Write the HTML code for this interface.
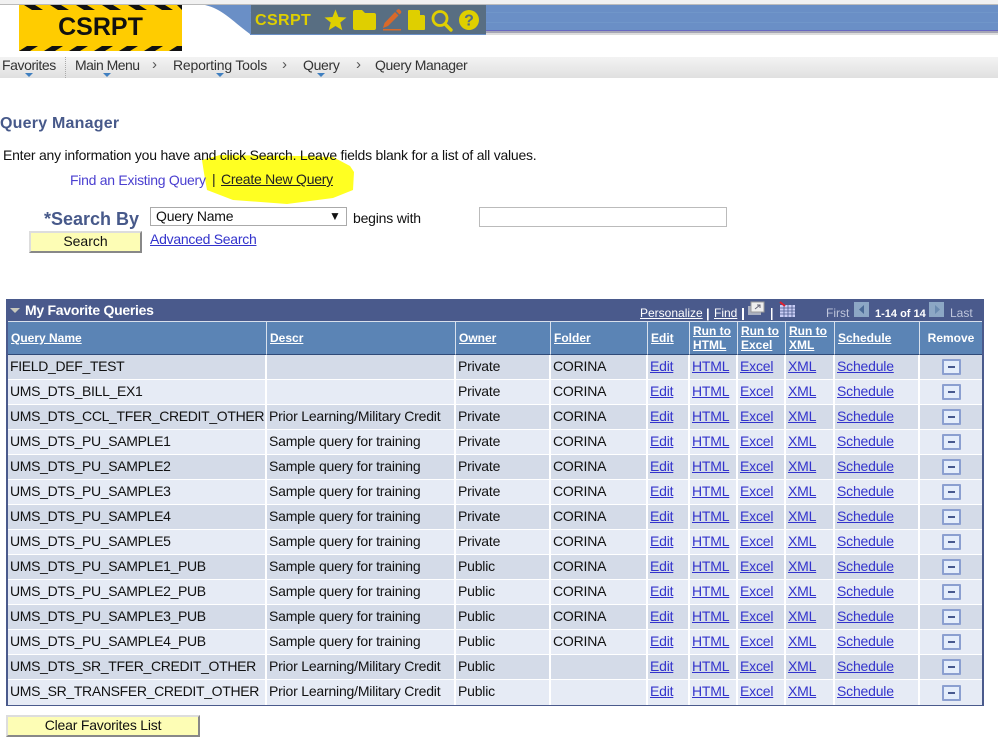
<!DOCTYPE html>
<html><head><meta charset="utf-8"><style>
html,body{margin:0;padding:0;background:#fff}
body{position:relative;width:998px;height:745px;overflow:hidden;font-family:"Liberation Sans",sans-serif;font-size:14px;color:#111}
.a{position:absolute;white-space:nowrap}
a,.l{color:#3333cc;text-decoration:underline}
.nav{color:#333;font-size:14px;top:57px;line-height:17px;letter-spacing:-.32px}
.chev{color:#555;font-size:15px;top:56px;line-height:17px}
.tri{position:absolute;top:73px;width:0;height:0;border-left:4px solid transparent;border-right:4px solid transparent;border-top:4px solid #3f7fc0}
.btn{position:absolute;background:#fdfdb5;border:2px solid;border-color:#ddd #888 #888 #ddd;box-sizing:border-box;text-align:center;color:#111;font-size:14px}
table{position:absolute;left:6px;top:321px;width:978px;border-collapse:separate;border-spacing:0;table-layout:fixed;border-left:2px solid #4a5a8c;border-right:2px solid #4a5a8c;border-bottom:1px solid #4a5a8c;box-sizing:border-box}
th{background:#5b84b5;color:#fff;font-size:12px;font-weight:bold;height:34px;padding:0 0 0 3px;text-align:left;border-right:1px solid #d8e0ec;border-top:1px solid #d8e0ec;border-bottom:1px solid #2f4a78;line-height:14px;box-sizing:border-box}
th a{color:#fff}
td{height:25px;box-sizing:border-box;padding:0 0 3px 2px;border-right:2px solid #fff;border-bottom:1px solid #fff;white-space:nowrap;overflow:hidden;line-height:20px;letter-spacing:-.2px}
td:first-child{letter-spacing:-.33px}
tr:last-child td{border-bottom:0;height:25px}
td:last-child,th:last-child{border-right:0}
tr.o td{background:#d4dbe8}
tr.e td{background:#e6ebf5}
td.r{text-align:center;padding:0}
.m{display:inline-block;width:19px;height:16px;box-sizing:border-box;border:2px solid #8b9fd0;background:#e4edfb;vertical-align:middle;position:relative;top:-1px;border-radius:1px}
.m:after{content:"";position:absolute;left:4px;top:5px;width:7px;height:2px;background:#47598f}
</style></head><body>

<div class="a" style="left:0;top:0;width:998px;height:4px;background:#f1f1f1"></div>
<div class="a" style="left:0;top:4px;width:998px;height:1px;background:#bbb"></div>

<svg class="a" style="left:200px;top:5px" width="798" height="30" viewBox="0 0 798 30">
<path d="M5 0 C22 4 30 14 50 29 L50 30 L798 30 L798 0Z" fill="#6a8fc6"/>
<rect x="50" y="7" width="748" height="1" fill="#7096c9"/>
<rect x="50" y="17" width="748" height="1" fill="#7096c9"/>
<rect x="286" y="25" width="512" height="1" fill="#6868c0"/>
<rect x="286" y="26" width="512" height="2" fill="#a5a5b5"/>
<rect x="286" y="28" width="512" height="2" fill="#dcdcdc"/>
</svg>

<div class="a" style="left:19px;top:5px;width:163px;height:46px;background:#ffcc00;overflow:hidden">
<svg width="163" height="46" style="position:absolute;left:0;top:0">
<g fill="#111">
<path d="M5 0h11l8 5h-11zM31 0h11l8 5h-11zM57 0h11l8 5h-11zM83 0h11l8 5h-11zM109 0h11l8 5h-11zM135 0h11l8 5h-11zM158 0h5v5z"/>
<path d="M0 46l8-5h11l-8 5zM25 46l8-5h11l-8 5zM50 46l8-5h11l-8 5zM75 46l8-5h11l-8 5zM100 46l8-5h11l-8 5zM125 46l8-5h11l-8 5zM150 46l8-5h5v5z"/>
</g></svg>
<div class="a" style="left:0;width:163px;text-align:center;top:8px;font-size:25px;line-height:29px;font-weight:bold;color:#111">CSRPT</div>
</div>

<div class="a" style="left:251px;top:5px;width:235px;height:29px;background:#586e82"></div>
<div class="a" style="left:255px;top:11px;font-size:16px;line-height:20px;font-weight:bold;color:#dfcf00;letter-spacing:.4px">CSRPT</div>
<svg class="a" style="left:322px;top:7px" width="160" height="26" viewBox="0 0 160 26">
<path d="M13.5 2.500l3 7.500 8 .5-6.200 5 2 7.800-6.800-4.300-6.800 4.300 2-7.800-6.200-5 8-.5z" fill="#dfcf00"/>
<path d="M31 5q0-2 2-2h7l3 3h9q2 0 2 2v13q0 2-2 2H33q-2 0-2-2z" fill="#dfcf00"/>
<path d="M61 21l1.500-5L73 5l3.500 3.500L66 19z" fill="#d9692a"/><path d="M74 4l1.500-1.500q1-.7 2 0l1.500 1.500q.7 1 0 2L77.500 7.500z" fill="#d9692a"/><rect x="61" y="22" width="18" height="1.500" fill="#d9692a"/>
<path d="M87 3h10l6 6v13q0 1-1 1H87q-1 0-1-1V4q0-1 1-1z" fill="#dfcf00"/><path d="M98 3v5h5z" fill="#586e82"/>
<circle cx="118" cy="11.500" r="7" fill="none" stroke="#dfcf00" stroke-width="2.800"/><path d="M123 17l6 6" stroke="#dfcf00" stroke-width="3.400" stroke-linecap="round"/>
<circle cx="147" cy="13" r="10" fill="#dfcf00"/>
<text x="147" y="18.500" font-family="Liberation Sans" font-size="16" font-weight="bold" text-anchor="middle" fill="#586e82">?</text>
</svg>

<div class="a" style="left:0;top:57px;width:998px;height:21px;background:linear-gradient(#f3f3f3,#e0e0e0)"></div>
<div class="a nav" style="left:2px;letter-spacing:-.42px">Favorites</div>
<div class="a" style="left:65px;top:57px;height:21px;border-left:1px dotted #aaa"></div>
<div class="a nav" style="left:75px;letter-spacing:-.52px">Main Menu</div>
<div class="a chev" style="left:152px">›</div>
<div class="a nav" style="left:173px;letter-spacing:-.2px">Reporting Tools</div>
<div class="a chev" style="left:282px">›</div>
<div class="a nav" style="left:303px">Query</div>
<div class="a chev" style="left:356px">›</div>
<div class="a nav" style="left:375px;letter-spacing:-.38px">Query Manager</div>
<div class="tri" style="left:25px"></div><div class="tri" style="left:103px"></div><div class="tri" style="left:216px"></div><div class="tri" style="left:317px"></div>

<div class="a" style="left:0;top:114px;font-size:16px;line-height:20px;font-weight:bold;color:#47598a;letter-spacing:.22px">Query Manager</div>

<svg class="a" style="left:0;top:0" width="400" height="220"><path d="M202 160L220 155L300 156L333 157L350 166L354 172L353 190L333 198L287 204L233 200L207 190L204 173Z" fill="#ffff22"/></svg>
<div class="a" style="left:3px;top:147px;line-height:17px;color:#111;letter-spacing:-.23px">Enter any information you have and click Search. Leave fields blank for a list of all values.</div>

<div class="a" style="left:70px;top:172px;line-height:17px;color:#4a3fd0;letter-spacing:-.27px">Find an Existing Query</div>
<div class="a" style="left:212px;top:171px;line-height:17px;color:#222">|</div>
<div class="a" style="left:221px;top:171px;line-height:17px;color:#222;text-decoration:underline;letter-spacing:-.25px">Create New Query</div>

<div class="a" style="left:44px;top:208px;font-size:18px;line-height:22px;font-weight:bold;color:#47598a">*Search By</div>
<div class="a" style="left:150px;top:207px;width:197px;height:19px;border:1px solid #aaa;box-sizing:border-box;line-height:16px;padding-left:5px;background:#fff;letter-spacing:-.2px">Query Name<span class="a" style="left:178px;top:2px;font-size:12px;line-height:13px">▼</span></div>
<div class="a" style="left:353px;top:210px;line-height:17px;letter-spacing:-.2px">begins with</div>
<div class="a" style="left:479px;top:207px;width:248px;height:20px;border:1px solid #bbb;box-sizing:border-box;background:#fff"></div>
<div class="btn" style="left:29px;top:231px;width:113px;height:22px;line-height:17px">Search</div>
<div class="a" style="left:150px;top:231px;line-height:17px;letter-spacing:-.27px"><a>Advanced Search</a></div>

<div class="a" style="left:6px;top:299px;width:978px;height:22px;background:#4a5a8c"></div>
<div class="a" style="left:10px;top:308px;width:0;height:0;border-left:5px solid transparent;border-right:5px solid transparent;border-top:5px solid #c9c9bd"></div>
<div class="a" style="left:25px;top:302px;font-size:14px;line-height:16px;font-weight:bold;color:#fff;letter-spacing:-.27px">My Favorite Queries</div>
<div class="a" style="left:640px;top:306px;font-size:12px;line-height:15px;color:#fff"><u>Personalize</u></div>
<div class="a" style="left:706px;top:306px;font-size:13px;line-height:15px;color:#fff;font-weight:bold">|</div>
<div class="a" style="left:714px;top:306px;font-size:12px;line-height:15px;color:#fff"><u>Find</u></div>
<svg class="a" style="left:740px;top:300px" width="60" height="22">
<rect x="2" y="8" width="2" height="12" fill="#fff"/>
<rect x="8" y="6" width="13" height="9" fill="#aab0c0"/><rect x="11" y="2" width="13" height="10" fill="#eee" stroke="#999"/><path d="M15 9l5-4M17 5h3v3" stroke="#667" fill="none"/>
<rect x="31" y="8" width="1.500" height="12" fill="#fff"/>
<rect x="40" y="5" width="15" height="12" fill="#c9cdf5"/><path d="M40 8h15M40 11h15M40 14h15M44 5v12M48 5v12M52 5v12" stroke="#4a5a8c" stroke-width=".8"/><path d="M40 2l5 4" stroke="#e02030" stroke-width="2"/>
</svg>
<div class="a" style="left:826px;top:306px;font-size:12px;line-height:15px;color:#bfc6dc">First</div>
<svg class="a" style="left:854px;top:302px" width="15" height="15"><rect width="15" height="15" fill="#8ca7c5"/><path d="M10 3v9l-5-4.500z" fill="#4a6a96"/></svg>
<div class="a" style="left:875px;top:307px;font-size:11px;line-height:14px;font-weight:bold;color:#fff">1-14 of 14</div>
<svg class="a" style="left:929px;top:302px" width="15" height="15"><rect width="15" height="15" fill="#8ca7c5"/><path d="M6 3v9l5-4.500z" fill="#6a8ab0"/></svg>
<div class="a" style="left:950px;top:306px;font-size:12px;line-height:15px;color:#bfc6dc">Last</div>

<table>
<colgroup><col style="width:259px"><col style="width:189px"><col style="width:95px"><col style="width:97px"><col style="width:42px"><col style="width:48px"><col style="width:48px"><col style="width:49px"><col style="width:85px"><col></colgroup>
<tr><th><a>Query Name</a></th><th><a>Descr</a></th><th><a>Owner</a></th><th><a>Folder</a></th><th><a>Edit</a></th><th><a>Run to HTML</a></th><th><a>Run to Excel</a></th><th><a>Run to XML</a></th><th><a>Schedule</a></th><th style="text-align:center;padding:0">Remove</th></tr>
<tr class="o"><td>FIELD_DEF_TEST</td><td></td><td>Private</td><td>CORINA</td><td><a>Edit</a></td><td><a>HTML</a></td><td><a>Excel</a></td><td><a>XML</a></td><td><a>Schedule</a></td><td class="r"><span class="m"></span></td></tr>
<tr class="e"><td>UMS_DTS_BILL_EX1</td><td></td><td>Private</td><td>CORINA</td><td><a>Edit</a></td><td><a>HTML</a></td><td><a>Excel</a></td><td><a>XML</a></td><td><a>Schedule</a></td><td class="r"><span class="m"></span></td></tr>
<tr class="o"><td>UMS_DTS_CCL_TFER_CREDIT_OTHER</td><td>Prior Learning/Military Credit</td><td>Private</td><td>CORINA</td><td><a>Edit</a></td><td><a>HTML</a></td><td><a>Excel</a></td><td><a>XML</a></td><td><a>Schedule</a></td><td class="r"><span class="m"></span></td></tr>
<tr class="e"><td>UMS_DTS_PU_SAMPLE1</td><td>Sample query for training</td><td>Private</td><td>CORINA</td><td><a>Edit</a></td><td><a>HTML</a></td><td><a>Excel</a></td><td><a>XML</a></td><td><a>Schedule</a></td><td class="r"><span class="m"></span></td></tr>
<tr class="o"><td>UMS_DTS_PU_SAMPLE2</td><td>Sample query for training</td><td>Private</td><td>CORINA</td><td><a>Edit</a></td><td><a>HTML</a></td><td><a>Excel</a></td><td><a>XML</a></td><td><a>Schedule</a></td><td class="r"><span class="m"></span></td></tr>
<tr class="e"><td>UMS_DTS_PU_SAMPLE3</td><td>Sample query for training</td><td>Private</td><td>CORINA</td><td><a>Edit</a></td><td><a>HTML</a></td><td><a>Excel</a></td><td><a>XML</a></td><td><a>Schedule</a></td><td class="r"><span class="m"></span></td></tr>
<tr class="o"><td>UMS_DTS_PU_SAMPLE4</td><td>Sample query for training</td><td>Private</td><td>CORINA</td><td><a>Edit</a></td><td><a>HTML</a></td><td><a>Excel</a></td><td><a>XML</a></td><td><a>Schedule</a></td><td class="r"><span class="m"></span></td></tr>
<tr class="e"><td>UMS_DTS_PU_SAMPLE5</td><td>Sample query for training</td><td>Private</td><td>CORINA</td><td><a>Edit</a></td><td><a>HTML</a></td><td><a>Excel</a></td><td><a>XML</a></td><td><a>Schedule</a></td><td class="r"><span class="m"></span></td></tr>
<tr class="o"><td>UMS_DTS_PU_SAMPLE1_PUB</td><td>Sample query for training</td><td>Public</td><td>CORINA</td><td><a>Edit</a></td><td><a>HTML</a></td><td><a>Excel</a></td><td><a>XML</a></td><td><a>Schedule</a></td><td class="r"><span class="m"></span></td></tr>
<tr class="e"><td>UMS_DTS_PU_SAMPLE2_PUB</td><td>Sample query for training</td><td>Public</td><td>CORINA</td><td><a>Edit</a></td><td><a>HTML</a></td><td><a>Excel</a></td><td><a>XML</a></td><td><a>Schedule</a></td><td class="r"><span class="m"></span></td></tr>
<tr class="o"><td>UMS_DTS_PU_SAMPLE3_PUB</td><td>Sample query for training</td><td>Public</td><td>CORINA</td><td><a>Edit</a></td><td><a>HTML</a></td><td><a>Excel</a></td><td><a>XML</a></td><td><a>Schedule</a></td><td class="r"><span class="m"></span></td></tr>
<tr class="e"><td>UMS_DTS_PU_SAMPLE4_PUB</td><td>Sample query for training</td><td>Public</td><td>CORINA</td><td><a>Edit</a></td><td><a>HTML</a></td><td><a>Excel</a></td><td><a>XML</a></td><td><a>Schedule</a></td><td class="r"><span class="m"></span></td></tr>
<tr class="o"><td>UMS_DTS_SR_TFER_CREDIT_OTHER</td><td>Prior Learning/Military Credit</td><td>Public</td><td></td><td><a>Edit</a></td><td><a>HTML</a></td><td><a>Excel</a></td><td><a>XML</a></td><td><a>Schedule</a></td><td class="r"><span class="m"></span></td></tr>
<tr class="e"><td>UMS_SR_TRANSFER_CREDIT_OTHER</td><td>Prior Learning/Military Credit</td><td>Public</td><td></td><td><a>Edit</a></td><td><a>HTML</a></td><td><a>Excel</a></td><td><a>XML</a></td><td><a>Schedule</a></td><td class="r"><span class="m"></span></td></tr>
</table>

<div class="btn" style="left:6px;top:715px;width:194px;height:22px;line-height:17px;letter-spacing:-.2px">Clear Favorites List</div>
</body></html>
